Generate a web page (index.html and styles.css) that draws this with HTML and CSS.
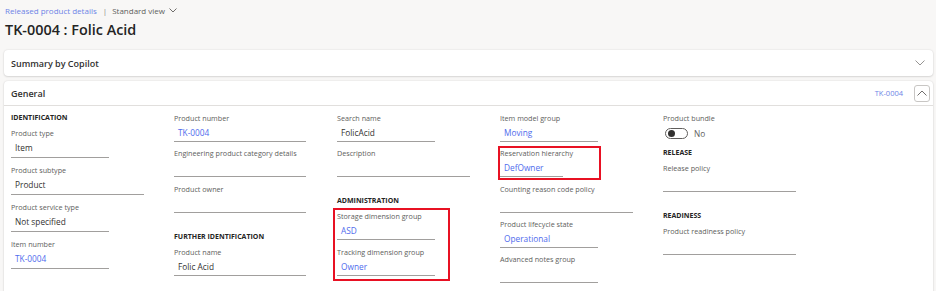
FILE: index.html
```html
<!DOCTYPE html>
<html lang="en">
<head>
  <meta charset="utf-8">
  <title>TK-0004 : Folic Acid</title>
  <link rel="stylesheet" href="styles.css">
</head>
<body>
  <div class="page">
    <div class="crumbs">
      <a class="crumb-link">Released product details</a>
      <span class="crumb-sep">|</span>
      <span class="view">Standard view
        <svg class="view-chev" viewBox="0 0 8 5" width="8" height="5"><path d="M0.5 0.5 L4 4 L7.5 0.5" fill="none" stroke="#605e5c" stroke-width="0.9"/></svg>
      </span>
    </div>
    <h1 class="title">TK-0004 : Folic Acid</h1>

    <!-- summary card -->
    <div class="card summary">
      <span class="card-title">Summary by Copilot</span>
      <svg class="chev" viewBox="0 0 10 6" width="10" height="6"><path d="M0.5 0.5 L5 5 L9.5 0.5" fill="none" stroke="#8a8886" stroke-width="0.9"/></svg>
    </div>

    <!-- general fasttab -->
    <div class="card general">
      <div class="card-head">
        <span class="card-title">General</span>
        <a class="head-link">TK-0004</a>
        <button class="collapse">
          <svg viewBox="0 0 10 6" width="10" height="6"><path d="M0.5 5.5 L5 1 L9.5 5.5" fill="none" stroke="#605e5c" stroke-width="0.9"/></svg>
        </button>
      </div>

      <div class="cols">
        <div class="col col-combo">
          <div class="group-title">IDENTIFICATION</div>
          <div class="field"><div class="label">Product type</div><div class="value w-s">Item</div></div>
          <div class="field"><div class="label">Product subtype</div><div class="value w-l">Product</div></div>
          <div class="field"><div class="label">Product service type</div><div class="value w-s">Not specified</div></div>
          <div class="field"><div class="label">Item number</div><div class="value w-s link">TK-0004</div></div>
        </div>

        <div class="col">
          <div class="field"><div class="label">Product number</div><div class="value w-m link">TK-0004</div></div>
          <div class="field"><div class="label">Engineering product category details</div><div class="value w-m"></div></div>
          <div class="field"><div class="label">Product owner</div><div class="value w-m"></div></div>
          <div class="group-title spaced">FURTHER IDENTIFICATION</div>
          <div class="field"><div class="label">Product name</div><div class="value w-m">Folic Acid</div></div>
        </div>

        <div class="col">
          <div class="field"><div class="label">Search name</div><div class="value w-s">FolicAcid</div></div>
          <div class="field"><div class="label">Description</div><div class="value w-l"></div></div>
          <div class="group-title spaced">ADMINISTRATION</div>
          <div class="flag flag-admin">
            <div class="field"><div class="label">Storage dimension group</div><div class="value w-s link">ASD</div></div>
            <div class="field"><div class="label">Tracking dimension group</div><div class="value w-s link">Owner</div></div>
          </div>
        </div>

        <div class="col">
          <div class="field"><div class="label">Item model group</div><div class="value w-s link">Moving</div></div>
          <div class="flag flag-reserve">
            <div class="field"><div class="label">Reservation hierarchy</div><div class="value w-xs link">DefOwner</div></div>
          </div>
          <div class="field"><div class="label">Counting reason code policy</div><div class="value w-l"></div></div>
          <div class="field"><div class="label">Product lifecycle state</div><div class="value w-s link">Operational</div></div>
          <div class="field"><div class="label">Advanced notes group</div><div class="value w-s"></div></div>
        </div>

        <div class="col">
          <div class="field"><div class="label">Product bundle</div>
            <div class="toggle-row"><span class="toggle"><span class="knob"></span></span><span class="toggle-text">No</span></div>
          </div>
          <div class="group-title">RELEASE</div>
          <div class="field"><div class="label">Release policy</div><div class="value w-l"></div></div>
          <div class="group-title spaced">READINESS</div>
          <div class="field"><div class="label">Product readiness policy</div><div class="value w-l"></div></div>
        </div>
      </div>
    </div>
  </div>
</body>
</html>
```

FILE: styles.css
```css
body {
  margin: 0;
  background: #f8f7f6;
  font-family: "Segoe UI", "Open Sans", "Noto Sans", sans-serif;
  color: #323130;
  overflow: hidden;
}
.page {
  padding: 0 3px 0 4px;
}

/* breadcrumb + title */
.crumbs {
  height: 20px;
  display: flex;
  align-items: center;
  padding-left: 1px;
  font-size: 8px;
  color: #605e5c;
}
.crumb-link {
  color: #6d84e6;
}
.crumb-sep {
  margin: 0 5px 0 6px;
  color: #8a8886;
}
.view-chev {
  margin-left: 2px;
  vertical-align: 1px;
}
.title {
  margin: 0;
  padding-left: 1px;
  font-size: 14.4px;
  font-weight: 600;
  line-height: 20px;
  color: #242424;
}

/* cards */
.card {
  background: #fff;
  border-radius: 4px;
  box-shadow: 0 0 2px rgba(0,0,0,0.12), 0 1px 2px rgba(0,0,0,0.10);
}
.card-title {
  font-size: 9px;
  font-weight: 600;
  color: #323130;
}
.summary {
  margin-top: 10px;
  height: 26px;
  display: flex;
  align-items: center;
  justify-content: space-between;
  padding: 0 7px;
}
.summary .chev {
  margin-right: 1px;
}
.general {
  margin-top: 5px;
  padding-bottom: 20px;
  border-radius: 4px 4px 0 0;
}
.card-head {
  height: 24px;
  display: flex;
  align-items: center;
  padding: 0 3px 0 7px;
  border-bottom: 1px solid #e1dfdd;
}
.card-head .card-title {
  flex: 1;
}
.head-link {
  font-size: 7.5px;
  color: #6d84e6;
  margin-right: 11px;
}
.collapse {
  width: 16px;
  height: 17px;
  padding: 0;
  border: 1px solid #c8c6c4;
  border-radius: 3px;
  background: #fff;
  display: flex;
  align-items: center;
  justify-content: center;
}

/* columns */
.cols {
  display: grid;
  grid-template-columns: repeat(5, 163px);
  padding: 6px 0 0 7px;
}
.group-title {
  font-size: 7px;
  font-weight: 700;
  line-height: 11px;
  margin-bottom: 4px;
  color: #252423;
}
.group-title.spaced {
  margin-top: 18px;
}
.field {
  margin-bottom: 5.3px;
}
.label {
  font-size: 7.2px;
  line-height: 12px;
  color: #605e5c;
}
.value {
  height: 17px;
  line-height: 17px;
  padding-left: 4px;
  font-size: 8.3px;
  color: #323130;
  border-bottom: 1px solid #a19f9d;
  box-sizing: content-box;
}
.col-combo .field {
  margin-bottom: 6px;
}
.col-combo .value {
  height: 18px;
  line-height: 18px;
}
.value.link {
  color: #4f6bed;
}
.w-xs { width: 59px; }
.w-s { width: 94px; }
.w-m { width: 128px; }
.w-l { width: 129px; }

/* toggle */
.toggle-row {
  height: 18px;
  display: flex;
  align-items: center;
  padding-left: 2px;
}
.toggle {
  width: 19px;
  height: 9px;
  border: 1px solid #605e5c;
  border-radius: 6px;
  display: flex;
  align-items: center;
  padding-left: 2px;
  box-sizing: content-box;
}
.knob {
  width: 7px;
  height: 7px;
  border-radius: 50%;
  background: #323130;
}
.toggle-text {
  margin-left: 6px;
  font-size: 8.3px;
  color: #605e5c;
}

/* red review marks drawn over the fields */
.flag {
  position: relative;
}
.flag::after {
  content: "";
  position: absolute;
  border: 2px solid #e81123;
  pointer-events: none;
}
.flag-admin::after {
  left: -4px;
  top: -2px;
  width: 113px;
  bottom: -5px;
}
.flag-reserve::after {
  left: -2px;
  top: -1px;
  width: 99px;
  bottom: -3px;
}
```
